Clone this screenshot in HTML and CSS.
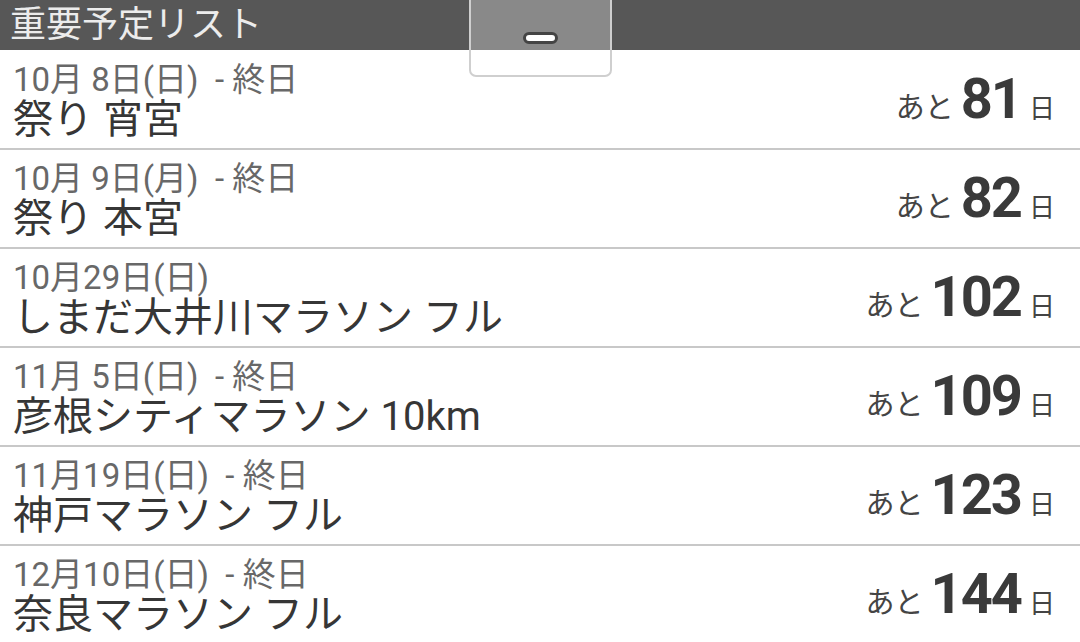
FILE: index.html
```html
<!DOCTYPE html>
<html lang="ja">
<head>
<meta charset="utf-8">
<link rel="stylesheet" href="styles.css">
</head>
<body>
<header class="bar">
  <h1 class="bar-title">重要予定リスト</h1>
</header>
<div class="handle"><span class="pill"></span></div>
<ul class="list">
  <li class="row">
    <div class="info"><div class="date">10月 8日(日)  - 終日</div><div class="name">祭り 宵宮</div></div>
    <div class="count"><span class="pre">あと</span><span class="num">81</span><span class="unit">日</span></div>
  </li>
  <li class="row">
    <div class="info"><div class="date">10月 9日(月)  - 終日</div><div class="name">祭り 本宮</div></div>
    <div class="count"><span class="pre">あと</span><span class="num">82</span><span class="unit">日</span></div>
  </li>
  <li class="row">
    <div class="info"><div class="date">10月29日(日)</div><div class="name">しまだ大井川マラソン フル</div></div>
    <div class="count"><span class="pre">あと</span><span class="num">102</span><span class="unit">日</span></div>
  </li>
  <li class="row">
    <div class="info"><div class="date">11月 5日(日)  - 終日</div><div class="name">彦根シティマラソン 10km</div></div>
    <div class="count"><span class="pre">あと</span><span class="num">109</span><span class="unit">日</span></div>
  </li>
  <li class="row">
    <div class="info"><div class="date">11月19日(日)  - 終日</div><div class="name">神戸マラソン フル</div></div>
    <div class="count"><span class="pre">あと</span><span class="num">123</span><span class="unit">日</span></div>
  </li>
  <li class="row">
    <div class="info"><div class="date">12月10日(日)  - 終日</div><div class="name">奈良マラソン フル</div></div>
    <div class="count"><span class="pre">あと</span><span class="num">144</span><span class="unit">日</span></div>
  </li>
</ul>
</body>
</html>
```
FILE: styles.css
```css
* { box-sizing: border-box; }
html, body { margin: 0; padding: 0; }
body {
  width: 1080px;
  height: 642px;
  overflow: hidden;
  background: #fff;
  font-family: Roboto, "Noto Sans CJK JP", sans-serif;
  position: relative;
}
.bar {
  height: 50px;
  background: #575757;
  display: flex;
  align-items: center;
  padding-left: 10px;
}
.bar-title {
  margin: 0;
  font-weight: normal;
  font-size: 36px;
  line-height: 42px;
  color: #ececec;
}
.handle {
  position: absolute;
  left: 469px;
  top: -3px;
  width: 143px;
  height: 80px;
  border: 2px solid #cfcfcf;
  border-radius: 0 0 7px 7px;
  background: rgba(255,255,255,0.3);
  display: flex;
  justify-content: center;
  padding-top: 33px;
}
.pill {
  width: 35px;
  height: 12px;
  border: 3px solid #444;
  border-radius: 6px;
  background: #fff;
}
.list { list-style: none; margin: 1px 0 0; padding: 0; }
.row {
  height: 99px;
  border-bottom: 2px solid #c8c8c8;
  display: flex;
  align-items: flex-start;
  justify-content: space-between;
  padding: 11px 25px 0 13px;
}
.info { display: flex; flex-direction: column; }
.date {
  white-space: pre;
  font-size: 33px;
  line-height: 36px;
  color: #686868;
}
.name {
  font-size: 40px;
  line-height: 44px;
  color: #363636;
}
.count {
  display: flex;
  align-items: baseline;
  color: #444;
  padding-top: 7px;
}
.pre { font-size: 29px; margin-right: 7px; }
.num {
  font-size: 56px;
  line-height: 60px;
  font-weight: bold;
  color: #3a3a3a;
  letter-spacing: -2px;
}
.unit { font-size: 26px; margin-left: 8px; }
```
